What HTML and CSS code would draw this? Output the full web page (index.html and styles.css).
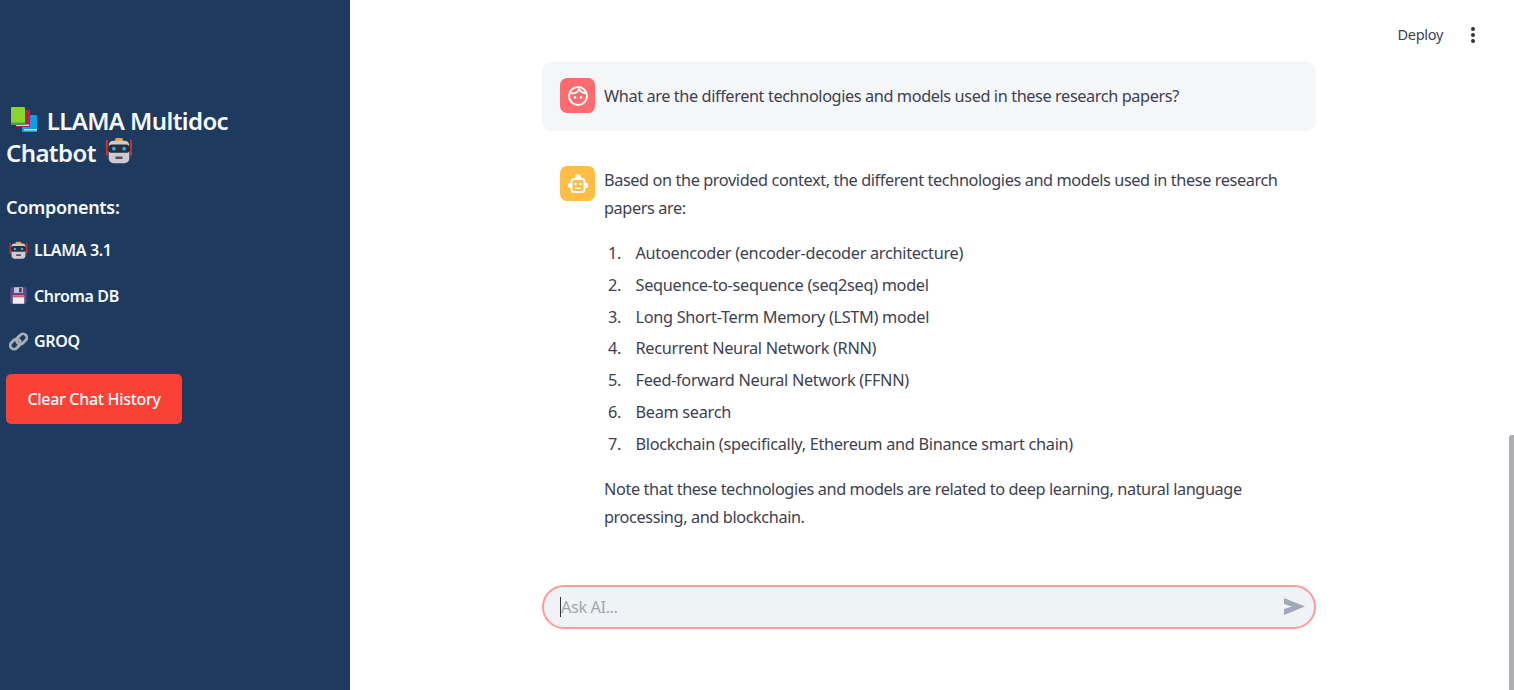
FILE: index.html
```html
<!DOCTYPE html>
<html lang="en">
<head>
<meta charset="utf-8">
<title>LLAMA Multidoc Chatbot</title>
<link rel="stylesheet" href="styles.css">
</head>
<body>
<div class="app">
  <aside class="sidebar">
    <h1 class="title">
      <svg class="emoji books" viewBox="0 0 26 25"><rect x="11" y="8" width="15" height="17" rx="1" fill="#0d9fe6"/><rect x="13" y="22" width="13" height="1.500" fill="#bfe3f3"/><rect x="5" y="3" width="14" height="17" rx="1" fill="#c2185b"/><rect x="5" y="17.500" width="13" height="1.500" fill="#e8c6d4"/><rect x="0" y="0" width="14" height="18" rx="1" fill="#8ad42c"/><rect x="0" y="15.500" width="14" height="2.500" fill="#4c9a4a"/></svg>
      LLAMA Multidoc<br>Chatbot
      <svg class="emoji robot-big" viewBox="0 0 30 30"><use href="#robot"/></svg>
    </h1>
    <h3 class="heading">Components:</h3>
    <p class="item"><svg class="emoji small" viewBox="0 0 30 30"><use href="#robot"/></svg>LLAMA 3.1</p>
    <p class="item"><svg class="emoji small" viewBox="0 0 30 30"><rect x="2" y="2" width="26" height="26" rx="3" fill="#5b4a86"/><rect x="8" y="2" width="14" height="9" fill="#c9c6d6"/><rect x="16" y="3" width="4" height="7" fill="#3c3160"/><rect x="6" y="15" width="18" height="13" fill="#eef0f4"/><rect x="6" y="15" width="18" height="3" fill="#e0567a"/></svg>Chroma DB</p>
    <p class="item"><svg class="emoji small" viewBox="0 0 30 30"><g fill="none" stroke="#a9aeb2" stroke-width="4.500"><rect x="1" y="13" width="18" height="12" rx="6" transform="rotate(-45 10 19)"/><rect x="11" y="5" width="18" height="12" rx="6" transform="rotate(-45 20 11)"/></g></svg>GROQ</p>
    <button class="clear" type="button">Clear Chat History</button>
  </aside>
  <main class="main">
    <header class="topbar">
      <span class="deploy">Deploy</span>
      <svg class="menu" viewBox="0 0 6 20"><circle cx="3" cy="4" r="2"/><circle cx="3" cy="10" r="2"/><circle cx="3" cy="16" r="2"/></svg>
    </header>
    <section class="column">
      <article class="msg user">
        <span class="avatar red">
          <svg viewBox="0 0 24 24" fill="none" stroke="#fff" stroke-width="2"><circle cx="12" cy="12" r="9"/><path d="M4 9c5 1 8-1 9-4 1 2 3 4 7 4" stroke-width="1.800"/><circle cx="9" cy="13.500" r="1.300" fill="#fff" stroke="none"/><circle cx="15" cy="13.500" r="1.300" fill="#fff" stroke="none"/></svg>
        </span>
        <div class="body"><p class="one">What are the different technologies and models used in these research papers?</p></div>
      </article>
      <article class="msg bot">
        <span class="avatar amber">
          <svg viewBox="0 0 24 24" fill="#fff"><rect x="9" y="2.500" width="6" height="4.500" rx="1.500"/><rect x="5.500" y="7" width="13" height="13" rx="2.500" fill="none" stroke="#fff" stroke-width="2"/><rect x="2" y="11" width="3.200" height="5" rx="1.400"/><rect x="18.800" y="11" width="3.200" height="5" rx="1.400"/><circle cx="9.500" cy="12" r="1.300"/><circle cx="14.500" cy="12" r="1.300"/><rect x="9" y="15.500" width="6" height="1.500"/></svg>
        </span>
        <div class="body">
          <p>Based on the provided context, the different technologies and models used in these research papers are:</p>
          <ol class="list">
            <li>Autoencoder (encoder-decoder architecture)</li>
            <li>Sequence-to-sequence (seq2seq) model</li>
            <li>Long Short-Term Memory (LSTM) model</li>
            <li>Recurrent Neural Network (RNN)</li>
            <li>Feed-forward Neural Network (FFNN)</li>
            <li>Beam search</li>
            <li>Blockchain (specifically, Ethereum and Binance smart chain)</li>
          </ol>
          <p>Note that these technologies and models are related to deep learning, natural language processing, and blockchain.</p>
        </div>
      </article>
      <form class="input">
        <span class="caret"></span><span class="placeholder">Ask AI...</span>
        <svg class="send" viewBox="0 0 21 17"><path d="M0 0l21 8.500L0 17l0-6 8-2.500-8-2.500z"/></svg>
      </form>
    </section>
    <div class="scrollbar"></div>
  </main>
</div>
<svg class="defs" width="0" height="0" aria-hidden="true"><defs>
  <g id="robot"><rect x="1" y="3" width="1.800" height="17" fill="#d8352a"/><rect x="27" y="3" width="1.800" height="17" fill="#d8352a"/><rect x="11" y="1" width="8" height="4" rx="1" fill="#f0a32c"/><rect x="4" y="4" width="22" height="24" rx="5" fill="#cfc9d3"/><rect x="3" y="8" width="24" height="9" rx="4.500" fill="#26303c"/><circle cx="9.500" cy="12.500" r="2" fill="#27b0e8"/><circle cx="20.500" cy="12.500" r="2" fill="#27b0e8"/><rect x="11" y="21" width="8" height="2.500" rx="1" fill="#55505c"/></g>
</defs></svg>
</body>
</html>
```
FILE: styles.css
```css
* { box-sizing: border-box; }
html, body { margin: 0; height: 100%; overflow: hidden; }
body { font-family: "Noto Sans", "Liberation Sans", sans-serif; color: #31333f; background: #fff; }
.defs { display: block; }
.app { display: flex; height: 690px; }

.sidebar { flex: 0 0 350px; background: #1e3a5f; padding: 105px 6px 0; color: #f7f9fb; }
.title { margin: 0; font-size: 24px; line-height: 31.500px; font-weight: 600; letter-spacing: -0.6px; }
.emoji { display: inline-block; vertical-align: -3px; }
.books { width: 26px; height: 25px; margin: 0 4px 0 5px; vertical-align: -2px; }
.robot-big { width: 28px; height: 28px; margin-left: 4px; vertical-align: -3px; }
.heading { margin: 27px 0 0; font-size: 18px; line-height: 25px; font-weight: 600; letter-spacing: -0.3px; }
.item { margin: 0; font-size: 16px; line-height: 24px; font-weight: 600; letter-spacing: -0.35px; padding-top: 21.500px; display: flex; align-items: center; }
.heading + .item { padding-top: 18px; }
.small { width: 19px; height: 19px; margin: 0 6px 0 3px; flex: none; }
.clear { display: block; margin-top: 20.500px; width: 176px; height: 50px; border: 0; border-radius: 5px; background: #f94135; color: #fff; font: 500 16px/24px "Noto Sans", sans-serif; letter-spacing: -0.3px; padding: 0; }

.main { flex: 1; position: relative; min-width: 0; }
.topbar { height: 62px; display: flex; align-items: center; justify-content: flex-end; padding: 7px 38px 0 0; }
.deploy { font-size: 14.500px; color: #3b4252; letter-spacing: -0.3px; margin: 0 27px 1px 0; }
.menu { width: 6px; height: 20px; fill: #31333f; }

.column { width: 774px; margin-left: 192px; }
.msg { display: flex; font-size: 16.300px; line-height: 28px; color: #3d4150; letter-spacing: -0.4px; }
.user { height: 69px; background: #f5f6f8; border-radius: 10px; padding: 16px 18px; }
.bot { margin-top: 35px; padding: 0 18px; height: 384px; }
.avatar { flex: 0 0 35px; width: 35px; height: 35px; border-radius: 7px; display: flex; align-items: center; justify-content: center; margin-right: 9px; }
.avatar svg { width: 24px; height: 24px; }
.red { background: #ff6b6e; }
.amber { background: #ffbd45; }
.body { flex: 1; min-width: 0; }
.body p { margin: 0; }
.one { padding-top: 3.500px; }
.list { margin: 16px 0 15px; padding: 0; list-style: none; counter-reset: step; letter-spacing: -0.3px; }
.list li { height: 31.750px; line-height: 31.750px; counter-increment: step; display: flex; }
.list li::before { content: counter(step) "."; box-sizing: border-box; flex: 0 0 31.500px; padding-left: 4px; }

.input { position: relative; margin-top: 34.500px; height: 44px; background: #f0f2f6; border: 2px solid #ff9a9c; border-radius: 22px; display: flex; align-items: center; padding-left: 16px; font-size: 16.300px; letter-spacing: -0.4px; }
.caret { width: 1px; height: 20px; background: #31333f; }
.placeholder { color: #a3a8b4; }
.send { position: absolute; right: 9.500px; top: 11.500px; width: 21px; height: 17px; fill: #a3a8b8; }
.scrollbar { position: absolute; right: 0; top: 435px; width: 5px; height: 255px; background: #adadb3; border-radius: 3px 0 0 0; }
```
